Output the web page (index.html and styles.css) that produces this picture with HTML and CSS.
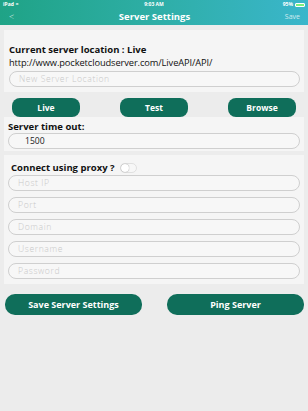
FILE: index.html
```html
<!DOCTYPE html>
<html>
<head>
<meta charset="utf-8">
<link rel="stylesheet" href="styles.css">
</head>
<body>
<header class="top">
  <div class="status">
    <span class="st-left">iPad <span class="wifi">&#8776;</span></span>
    <span class="st-mid">9:03 AM</span>
    <span class="st-right">95% <span class="batt"><span class="batt-fill"></span></span></span>
  </div>
  <div class="nav">
    <span class="back">&lt;</span>
    <span class="title">Server Settings</span>
    <span class="save">Save</span>
  </div>
</header>
<main class="content">
  <section class="panel p1">
    <div class="label">Current server location : Live</div>
    <div class="url">http://www.pocketcloudserver.com/LiveAPI/API/</div>
    <div class="field">New Server Location</div>
  </section>
  <div class="btnrow">
    <button class="btn small">Live</button>
    <button class="btn small">Test</button>
    <button class="btn small">Browse</button>
  </div>
  <section class="panel p2">
    <div class="label">Server time out:</div>
    <div class="field value">1500</div>
  </section>
  <section class="panel p3">
    <div class="proxy">
      <span class="label">Connect using proxy ?</span>
      <span class="toggle"><span class="knob"></span></span>
    </div>
    <div class="fields">
      <div class="field">Host IP</div>
      <div class="field">Port</div>
      <div class="field">Domain</div>
      <div class="field">Username</div>
      <div class="field">Password</div>
    </div>
  </section>
  <div class="btnrow bottom">
    <button class="btn big">Save Server Settings</button>
    <button class="btn big">Ping Server</button>
  </div>
</main>
</body>
</html>
```
FILE: styles.css
```css
* { box-sizing: border-box; }
html, body { margin: 0; padding: 0; }
body {
  width: 308px;
  height: 411px;
  background: #ececec;
  font-family: "Open Sans", "Noto Sans", sans-serif;
  color: #222;
  overflow: hidden;
}
.top {
  background: linear-gradient(90deg, #1fa386 0%, #2eaea6 50%, #3ab6cb 100%);
  color: #fff;
}
.status {
  height: 9px;
  display: flex;
  justify-content: space-between;
  align-items: center;
  padding: 0 3px 0 3px;
  font-size: 5px;
  font-weight: 700;
  line-height: 9px;
}
.st-left, .st-right { width: 40px; display: flex; align-items: center; gap: 2px; }
.st-right { justify-content: flex-end; }
.batt {
  display: inline-block;
  width: 10px;
  height: 4px;
  border: 1px solid #fff;
  border-radius: 1px;
  padding: 0;
}
.batt-fill { display: block; width: 100%; height: 100%; background: #7cf07c; }
.nav {
  height: 16px;
  display: flex;
  align-items: center;
  justify-content: space-between;
  padding: 0 8px 1px 9px;
}
.back { font-size: 9px; font-weight: 300; width: 30px; opacity: 0.8; }
.title { font-size: 9.5px; font-weight: 700; }
.save { font-size: 7px; width: 30px; text-align: right; opacity: 0.75; }
.content {
  padding: 5px 4px 0 4px;
  display: flex;
  flex-direction: column;
}
.panel { background: #f5f5f5; }
.p1 { padding: 14px 4px 5px 5px; }
.label { font-size: 9.5px; font-weight: 700; color: #111; line-height: 12px; }
.url { font-size: 9.3px; color: #111; line-height: 13px; letter-spacing: -0.1px; }
.field {
  height: 16px;
  border: 1px solid #cfcfcf;
  border-radius: 8px;
  background: #f7f7f7;
  font-size: 8.6px;
  color: #c8c8c8;
  padding: 0 0 0 9px;
  line-height: 14px;
  font-weight: 300;
  letter-spacing: 0.6px;
}
.p1 .field { margin-top: 2px; }
.field.value { color: #222; font-weight: 400; padding-left: 16px; letter-spacing: 0; }
.btnrow {
  display: flex;
  justify-content: space-between;
  padding: 6px 8px 0 8px;
}
.btn {
  border: none;
  background: #0f6e5a;
  color: #fff;
  font-family: "Open Sans", "Noto Sans", sans-serif;
  font-weight: 700;
  font-size: 8.5px;
  padding: 0;
}
.btn.small { width: 68px; height: 19px; border-radius: 8px; }
.p2 { padding: 3px 4px 2px 4px; }
.p2 .label { line-height: 13px; }
.p2 .field { height: 16px; }
.p3 { margin-top: 4px; padding: 6px 4px 5px 4px; }
.proxy { display: flex; align-items: center; gap: 5px; padding-left: 3px; height: 14px; }
.toggle {
  width: 17px;
  height: 10px;
  border-radius: 5px;
  border: 1px solid #e0e0e0;
  background: #f7f7f7;
  position: relative;
}
.knob {
  position: absolute;
  left: 0;
  top: 0;
  width: 8px;
  height: 8px;
  border-radius: 50%;
  background: #fff;
  box-shadow: 0 0 1px rgba(0,0,0,0.5);
}
.fields { display: flex; flex-direction: column; gap: 6px; margin-top: 0; }
.bottom { padding: 10px 0 0 1px; }
.btn.big { width: 137px; height: 21px; border-radius: 10px; font-size: 9px; }
```
